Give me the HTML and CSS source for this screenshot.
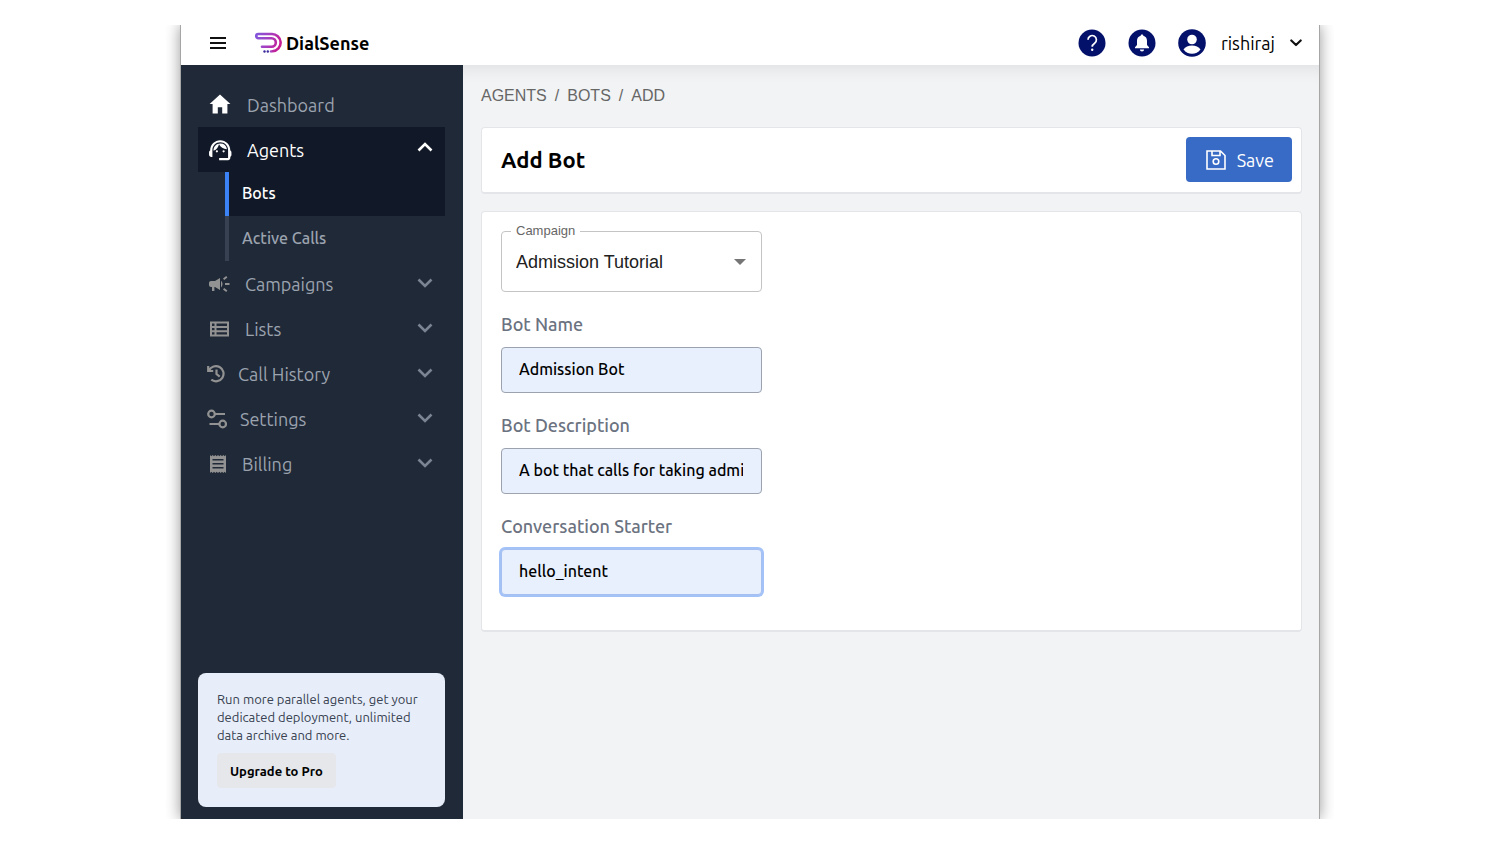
FILE: index.html
```html
<!DOCTYPE html>
<html lang="en">
<head>
<meta charset="utf-8">
<title>DialSense - Add Bot</title>
<link rel="stylesheet" href="styles.css">
</head>
<body>
<div class="window">
  <header class="topbar">
    <button class="icon-button" type="button" aria-label="Toggle menu">
      <svg width="16" height="12" viewBox="0 0 16 12" fill="none" stroke="#111" stroke-width="2"><path d="M0 1h16M0 6h16M0 11h16"/></svg>
    </button>
    <a class="brand" href="#">
      <svg width="28" height="22" viewBox="0 0 28 22" fill="none" aria-hidden="true">
        <defs><linearGradient id="brand-fill" x1="0" y1="0" x2="28" y2="10" gradientUnits="userSpaceOnUse"><stop stop-color="#7a5be0"/><stop offset=".55" stop-color="#a63fc0"/><stop offset="1" stop-color="#c81b90"/></linearGradient></defs>
        <path d="M18.500 19.200A8.600 8.600 0 0 0 17.500 2H4.300a2.100 2.100 0 0 0 0 4.200h13.200a4.300 4.300 0 0 1 0 8.600H8" stroke="url(#brand-fill)" stroke-width="2.600" stroke-linecap="round"/>
        <g fill="#3b2a9c"><circle cx="10.500" cy="19.500" r="1.200"/><circle cx="13.800" cy="19.500" r="1.200"/></g><circle cx="17" cy="19.400" r="1.200" fill="#a63fc0"/>
      </svg>
      <span>DialSense</span>
    </a>
    <div class="actions">
      <button class="icon-button" type="button" aria-label="Help">
        <svg width="28" height="28" viewBox="0 0 28 28"><circle cx="14" cy="14" r="13.500" fill="#04116b"/><path d="M10 10.800a4.200 4.200 0 1 1 6.600 3.400c-1.600 1.100-2.400 1.800-2.400 3.600" fill="none" stroke="#fff" stroke-width="1.700"/><circle cx="14.200" cy="20.700" r="1.200" fill="#fff"/></svg>
      </button>
      <button class="icon-button" type="button" aria-label="Notifications">
        <svg width="28" height="28" viewBox="0 0 28 28"><circle cx="14" cy="14" r="13.500" fill="#04116b"/><path d="M14 5.500c.8 0 1.300.5 1.300 1.300 2.400.6 3.700 2.500 3.700 5v4.200l2 2.200v1H7v-1l2-2.200v-4.200c0-2.500 1.300-4.400 3.700-5 0-.8.500-1.300 1.300-1.300zM11.900 20.400h4.200a2.100 2.100 0 0 1-4.200 0z" fill="#fff"/></svg>
      </button>
      <button class="user" type="button">
        <svg width="28" height="28" viewBox="0 0 28 28"><circle cx="14" cy="14" r="13.800" fill="#04116b"/><circle cx="14" cy="10.500" r="4.800" fill="#fff"/><path d="M5.500 20.600c1.600-2.700 5-4 8.500-4s6.900 1.300 8.500 4a10.600 10.600 0 0 1-17 0z" fill="#fff"/></svg>
        <span>rishiraj</span>
        <svg width="12" height="8" viewBox="0 0 12 8" fill="none" stroke="#111" stroke-width="2.200" stroke-linecap="round" stroke-linejoin="round"><path d="M1.300 1.500L6 6l4.700-4.500"/></svg>
      </button>
    </div>
  </header>

  <div class="body">
    <aside class="sidebar">
      <nav>
        <a class="item" href="#">
          <svg width="27" height="26" viewBox="0 0 27 26" fill="#fff"><path d="M13 2.500L2.600 12h3v9.500h5.200v-6.300h4.400v6.300h5.200V12h3z"/></svg>
          <span>Dashboard</span>
        </a>
        <a class="item open" href="#">
          <svg width="27" height="26" viewBox="0 0 27 26" fill="#fff"><path transform="translate(-.2 -.2) scale(1.120)" d="M21 12.220C21 6.730 16.740 3 12 3c-4.690 0-9 3.650-9 9.280-.6.340-1 .98-1 1.720v2c0 1.100.9 2 2 2h1v-6.100c0-3.870 3.130-7 7-7s7 3.130 7 7V19h-8v2h8c1.100 0 2-.9 2-2v-1.220c.59-.31 1-.92 1-1.640v-2.300c0-.7-.41-1.310-1-1.620zM9 12a1 1 0 1 0 0 2 1 1 0 0 0 0-2zm6 0a1 1 0 1 0 0 2 1 1 0 0 0 0-2zm3-.970A6.040 6.040 0 0 0 12.050 6c-3.030 0-6.290 2.510-6.030 6.450a8.075 8.075 0 0 0 4.860-5.890c1.310 2.630 4 4.440 7.120 4.470z"/></svg>
          <span>Agents</span>
          <svg class="chevron" width="16" height="10" viewBox="0 0 16 10"><path d="M1.500 8.500L8 2l6.500 6.500"/></svg>
        </a>
        <div class="submenu">
          <a class="subitem current" href="#">Bots</a>
          <a class="subitem" href="#">Active Calls</a>
        </div>
        <a class="item" href="#">
          <svg width="25" height="24" viewBox="0 0 25 24" fill="#929292"><path d="M18 11v2h4.500v-2zM16 17.600l3.200 2.400 1.200-1.600-3.200-2.400zM20.400 5.600L19.200 4 16 6.400 17.200 8zM4 9c-1.100 0-2 .9-2 2v2c0 1.100.9 2 2 2h1v4h2.400v-4H8l5 3V6L8 9zM15.500 12c0-1.300-.6-2.500-1.500-3.300v6.700c.9-.9 1.500-2.100 1.500-3.400z"/></svg>
          <span>Campaigns</span>
          <svg class="chevron" width="16" height="10" viewBox="0 0 16 10"><path d="M1.500 1.500L8 8l6.500-6.500"/></svg>
        </a>
        <a class="item" href="#">
          <svg width="25" height="24" viewBox="0 0 25 24" fill="none" stroke="#929292" stroke-width="2"><path d="M4 5.500h17v13H4zM8.500 5v14M4 10h17M4 14.200h17"/></svg>
          <span>Lists</span>
          <svg class="chevron" width="16" height="10" viewBox="0 0 16 10"><path d="M1.500 1.500L8 8l6.500-6.500"/></svg>
        </a>
        <a class="item" href="#">
          <svg width="18" height="20" viewBox="0 0 18 20" fill="none" stroke="#929292" stroke-width="2.200"><path d="M1.200 2v5h5M2 6.600A7.600 7.600 0 1 1 4.300 15.700M9.500 5.500V10l3.200 2.600"/></svg>
          <span>Call History</span>
          <svg class="chevron" width="16" height="10" viewBox="0 0 16 10"><path d="M1.500 1.500L8 8l6.500-6.500"/></svg>
        </a>
        <a class="item" href="#">
          <svg width="20" height="20" viewBox="0 0 20 20" fill="none" stroke="#929292" stroke-width="2.200"><circle cx="4.500" cy="5" r="3.300"/><path d="M8 5h10M2.500 15H12"/><circle cx="15.700" cy="15" r="3.300"/></svg>
          <span>Settings</span>
          <svg class="chevron" width="16" height="10" viewBox="0 0 16 10"><path d="M1.500 1.500L8 8l6.500-6.500"/></svg>
        </a>
        <a class="item" href="#">
          <svg width="22" height="22" viewBox="0 0 22 22" fill="#929292"><path fill-rule="evenodd" d="M3 2l1.300 1.200L5.700 2 7 3.200 8.300 2l1.400 1.200L11 2l1.300 1.200L13.700 2 15 3.200 16.300 2l1.400 1.200L19 2v18l-1.300-1.200-1.400 1.200-1.300-1.200-1.300 1.200-1.400-1.200L11 20l-1.300-1.200L8.300 20 7 18.800 5.700 20l-1.400-1.200L3 20zM5.500 6v1.500h11V6zM5.500 10v1.500h11V10zM5.500 14v1.500h11V14z"/></svg>
          <span>Billing</span>
          <svg class="chevron" width="16" height="10" viewBox="0 0 16 10"><path d="M1.500 1.500L8 8l6.500-6.500"/></svg>
        </a>
      </nav>
      <section class="promo">
        <p>Run more parallel agents, get your dedicated deployment, unlimited data archive and more.</p>
        <button type="button">Upgrade to Pro</button>
      </section>
    </aside>

    <main class="content">
      <nav class="crumbs" aria-label="Breadcrumb"><a href="#">AGENTS</a><span>/</span><a href="#">BOTS</a><span>/</span><a href="#">ADD</a></nav>
      <div class="card heading">
        <h1>Add Bot</h1>
        <button class="save" type="button">
          <svg width="20" height="20" viewBox="0 0 20 20" fill="none" stroke="#fff" stroke-width="1.600"><path d="M1 1h13.500L19 5.500V19H1zM6 1v4.500h8V1"/><circle cx="10" cy="11.500" r="2.800"/></svg>
          <span>Save</span>
        </button>
      </div>
      <form class="card form">
        <div class="select-field">
          <label for="campaign">Campaign</label>
          <select id="campaign"><option>Admission Tutorial</option></select>
          <svg width="12" height="6" viewBox="0 0 12 6" fill="#757575"><path d="M0 0h12L6 6z"/></svg>
        </div>
        <div class="field">
          <label for="bot-name">Bot Name</label>
          <input id="bot-name" type="text" value="Admission Bot">
        </div>
        <div class="field">
          <label for="bot-description">Bot Description</label>
          <input id="bot-description" type="text" value="A bot that calls for taking admissions">
        </div>
        <div class="field">
          <label for="starter">Conversation Starter</label>
          <input id="starter" class="focused" type="text" value="hello_intent">
        </div>
      </form>
    </main>
  </div>
</div>
</body>
</html>
```
FILE: styles.css
```css
* { box-sizing: border-box; }

body {
  margin: 0;
  padding: 25px 12%;
  background: #fff;
  color: #000;
  font-family: Ubuntu, "Noto Sans", sans-serif;
  font-size: 16px;
}

a { color: inherit; text-decoration: none; }

button {
  border: 0;
  padding: 0;
  background: none;
  color: inherit;
  font-family: inherit;
  cursor: pointer;
}

svg { display: block; flex: none; }

.window {
  display: flex;
  flex-direction: column;
  min-height: calc(100vh - 50px);
  border: solid #a6a6a6;
  border-width: 0 1px;
  box-shadow: 0 0 14px rgba(0, 0, 0, .4);
  clip-path: inset(0 -14px);
}

.topbar {
  display: flex;
  align-items: center;
  height: 40px;
  padding: 0 17px 4px 29px;
  background: #fff;
}

.brand {
  display: flex;
  align-items: center;
  gap: 4px;
  margin-left: 28px;
  font-size: 18px;
  font-weight: 700;
}

.actions {
  display: flex;
  align-items: center;
  gap: 22px;
  margin-left: auto;
}

.user {
  display: flex;
  align-items: center;
  gap: 15px;
  font-size: 18px;
}

.body { display: flex; flex: 1; }

.sidebar {
  display: flex;
  flex: none;
  flex-direction: column;
  justify-content: space-between;
  width: 282px;
  padding: 17px 18px 12px 17px;
  background: #202937;
}

.item {
  display: flex;
  align-items: center;
  gap: 13px;
  height: 45px;
  padding: 0 12px 0 9px;
  color: #9ba3af;
  font-size: 18px;
}

.chevron {
  margin-left: auto;
  margin-bottom: 2px;
  fill: none;
  stroke: #7b8493;
  stroke-width: 2.6;
}

.open { background: #111827; color: #fff; }
.open .chevron { margin-bottom: 5px; stroke: #fff; }

.submenu { margin-left: 27px; }

.subitem {
  display: flex;
  align-items: center;
  height: 45px;
  padding: 0 13px 2px;
  border-left: 4px solid #374151;
  color: #9ba3af;
  font-size: 16px;
  font-weight: 500;
}

.current {
  height: 44px;
  border-color: #3b82f6;
  background: #111827;
  color: #fff;
}

.promo {
  padding: 17px 19px 19px;
  border-radius: 8px;
  background: #e8eef9;
}

.promo p {
  margin: 0 0 9px;
  color: #374151;
  font-size: 13px;
  line-height: 18px;
}

.promo button {
  height: 35px;
  padding: 0 13px;
  border-radius: 4px;
  background: #e5e7eb;
  font-size: 13px;
  font-weight: 700;
}

.content {
  flex: 1;
  min-width: 0;
  padding: 18px 17px 18px 18px;
  background: #f2f3f5;
  box-shadow: inset 0 16px 16px -12px rgba(0, 0, 0, .08);
}

.crumbs {
  display: flex;
  gap: 8px;
  padding-top: 1px;
  margin-bottom: 19px;
  color: #666;
  font-family: "Liberation Sans", sans-serif;
  font-size: 16px;
  line-height: 24px;
}

.card {
  border: 1px solid #e3e5e9;
  border-bottom-width: 2px;
  border-radius: 4px;
  background: #fff;
}

.heading {
  display: flex;
  align-items: center;
  justify-content: space-between;
  height: 67px;
  margin-bottom: 17px;
  padding: 0 9px 1px 19px;
}

.heading h1 { margin: 0; font-size: 22px; font-weight: 700; }

.save {
  display: flex;
  align-items: center;
  gap: 11px;
  height: 45px;
  padding: 0 18px 0 20px;
  border-radius: 4px;
  background: #386bc6;
  color: #fff;
  font-size: 18px;
}

.form {
  display: grid;
  grid-template-columns: 261px;
  gap: 20px;
  padding: 19px 19px 35px;
}

.select-field { position: relative; font-family: "Liberation Sans", sans-serif; }

.select-field label {
  position: absolute;
  top: -9px;
  left: 10px;
  padding: 0 5px;
  background: #fff;
  color: #666;
  font-size: 13px;
  line-height: 18px;
}

.select-field select {
  display: block;
  width: 100%;
  height: 61px;
  padding: 0 14px;
  border: 1px solid #c4c4c4;
  border-radius: 4px;
  background: #fff;
  color: #212121;
  appearance: none;
  font-family: inherit;
  font-size: 18px;
}

.select-field svg {
  position: absolute;
  top: 28px;
  right: 16px;
  pointer-events: none;
}

.field { display: grid; gap: 11px; }

.field label {
  color: #6b7280;
  font-size: 18px;
  font-weight: 500;
  line-height: 24px;
}

.field input {
  width: 100%;
  height: 46px;
  padding: 0 18px 2px 17px;
  border: 1px solid #9ca3af;
  border-radius: 4px;
  outline: 0;
  background: #e8f0fe;
  color: #000;
  font-family: inherit;
  font-size: 16px;
  font-weight: 500;
}

.field .focused {
  border-color: #a4bff0;
  box-shadow: 0 0 0 2px #a3c3f8;
}
```
